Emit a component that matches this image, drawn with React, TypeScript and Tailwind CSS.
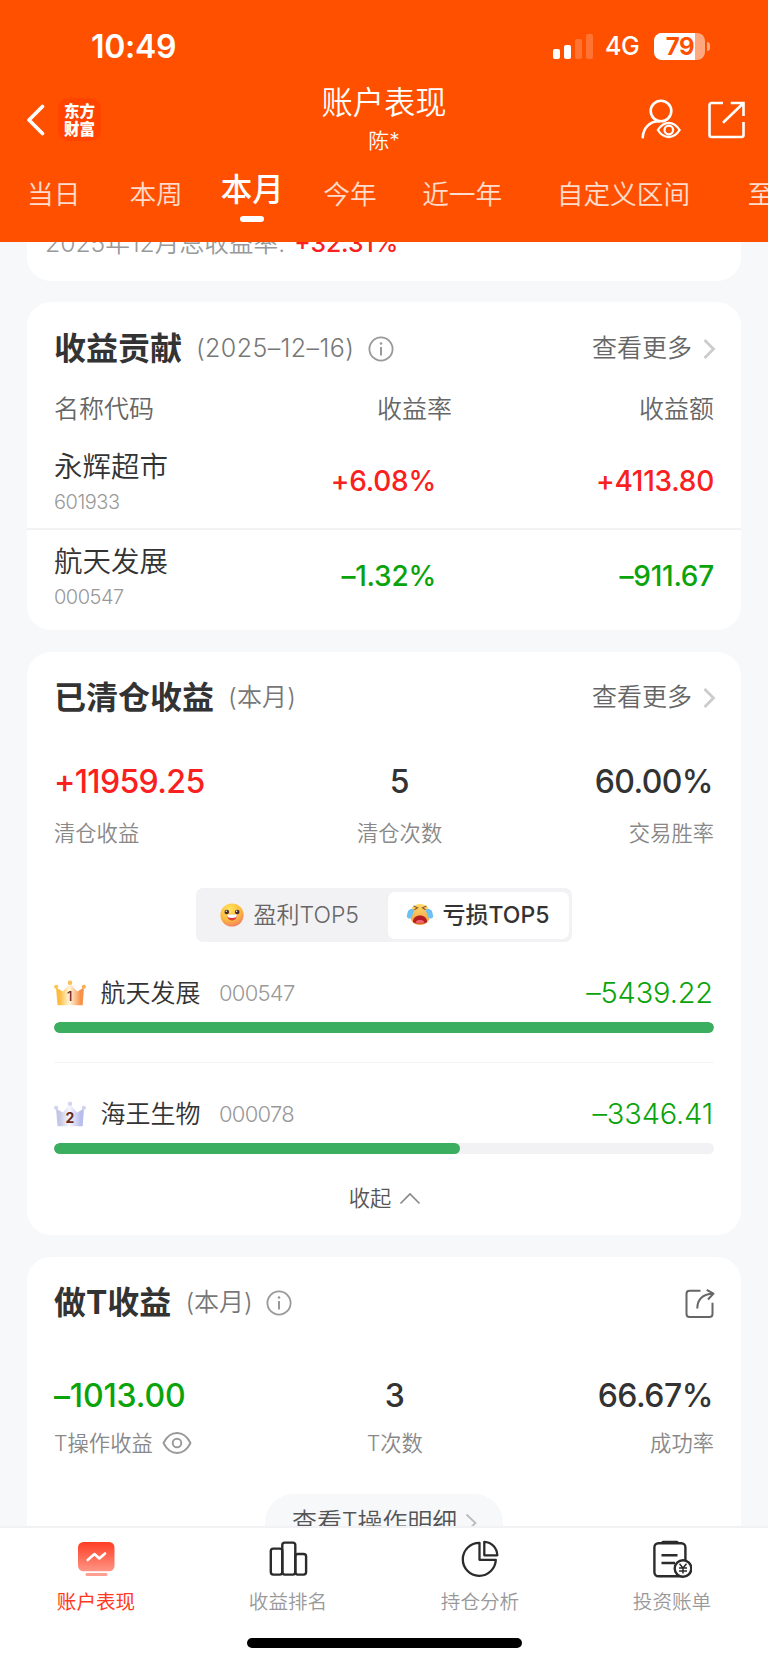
import type { ReactNode } from 'react'
import clsx from 'clsx'

interface Tab {
    label: string
    className: string
    active?: boolean
}

interface Holding {
    name: string
    code: string
    rate: string
    amount: string
    down?: boolean
}

interface RankProps {
    rank: number
    name: string
    code: string
    value: string
    percent: number
}

const TABS: Tab[] = [
    { label: '当日', className: 'ml-[27px]' },
    { label: '本周', className: 'ml-[49px]' },
    { label: '本月', className: 'ml-[38px]', active: true },
    { label: '今年', className: 'ml-[39.5px]' },
    { label: '近一年', className: 'ml-[45.5px]' },
    { label: '自定义区间', className: 'ml-[54.5px]' },
    { label: '至今', className: 'ml-[57.5px]' },
]

const HOLDINGS: Holding[] = [
    { name: '永辉超市', code: '601933', rate: '+6.08%', amount: '+4113.80' },
    { name: '航天发展', code: '000547', rate: '–1.32%', amount: '–911.67', down: true },
]

const RANKS: RankProps[] = [
    { rank: 1, name: '航天发展', code: '000547', value: '–5439.22', percent: 100 },
    { rank: 2, name: '海王生物', code: '000078', value: '–3346.41', percent: 61.5 },
]

function StatusBar () {
    return (
        <div className="flex h-[86px] items-center pt-[7px] pr-[58px] pl-[91px]">
            <span className="flex-1 text-[32px] leading-none font-semibold tracking-[-0.3px]">10:49</span>
            <div className="flex h-[25px] items-end gap-[4px]">
                <i className="h-[10px] w-[7px] rounded-[2px] bg-white" />
                <i className="h-[14px] w-[7px] rounded-[2px] bg-white" />
                <i className="h-[20px] w-[7px] rounded-[2px] bg-white/20" />
                <i className="h-[25px] w-[7px] rounded-[2px] bg-white/20" />
            </div>
            <span className="ml-[12px] w-[49px] text-[25px] leading-none font-medium tracking-[-0.5px]">4G</span>
            <div className="flex h-[27px] w-[51px] items-center overflow-hidden rounded-[8px] bg-white/50">
                <span className="h-full w-[41px] bg-white pr-[1px] text-right text-[24px] leading-[27px] font-bold tracking-[-0.5px] text-[#ff5000]">79</span>
            </div>
            <i className="ml-[2px] h-[9px] w-[3px] rounded-r-full bg-white/50" />
        </div>
    )
}

function NavBar () {
    return (
        <div className="flex h-[66px] items-start">
            <div className="flex h-full w-[140px] items-center pl-[26px]">
                <svg className="mt-[1px]" width="19" height="32" viewBox="0 0 19 32" fill="none" stroke="#fff" strokeWidth="3.6" strokeLinecap="round" strokeLinejoin="round">
                    <path d="M16.5 2.5L3 16l13.500 13.500" />
                </svg>
                <div className="ml-[13px] flex size-[43px] flex-col items-center justify-center rounded-[10px] bg-[#ff4400] pb-[1px] font-['Noto_Sans_CJK_SC',sans-serif] text-[15.5px] leading-[18px] font-black">
                    <span>东方</span>
                    <span>财富</span>
                </div>
            </div>
            <div className="flex-1 text-center">
                <h1 className="text-[31.3px] leading-[35px] font-[350]">账户表现</h1>
                <p className="mt-[8px] text-[21px] leading-[24px] font-[350]">陈*</p>
            </div>
            <div className="flex h-full w-[140px] items-center justify-end gap-[26px] pr-[23px]">
                <svg width="41" height="41" viewBox="0 0 41 41" fill="none" stroke="#fff" strokeWidth="2.6" strokeLinecap="round">
                    <circle cx="21" cy="12" r="10.300" />
                    <path d="M2.700 38.300C3.300 29 9.500 22.500 19 22.300" />
                    <path d="M17.900 31C21 26 24.500 23.800 28.800 23.800S36.500 26 39.600 31C36.500 36 33 38 28.800 38S21 36 17.900 31Z" strokeWidth="2.300" />
                    <circle cx="28.800" cy="31" r="4.300" strokeWidth="2.300" />
                </svg>
                <svg width="38" height="39" viewBox="0 0 38 39" fill="none" stroke="#fff" strokeWidth="2.6">
                    <path d="M16 3H4.500A2 2 0 0 0 2.500 5V35A2 2 0 0 0 4.500 37H34.500A2 2 0 0 0 36.500 35V22" />
                    <path d="M23.700 3H36.500V16M16 22.800L36 3.500" />
                </svg>
            </div>
        </div>
    )
}

function PeriodTabs () {
    return (
        <div className="flex h-[90px] items-start overflow-hidden whitespace-nowrap">
            {TABS.map(tab => (
                <div
                    key={tab.label}
                    className={clsx('flex shrink-0 flex-col items-center leading-[32px]', tab.className, tab.active ? 'pt-[22px]' : 'pt-[26px]')}>
                    <span className={tab.active ? 'text-[31.5px] font-medium' : 'text-[26.7px] font-[350] text-white/80'}>{tab.label}</span>
                    {tab.active && <i className="mt-[10px] h-[6px] w-[24px] rounded-full bg-white" />}
                </div>
            ))}
        </div>
    )
}

function InfoIcon () {
    return (
        <svg width="26" height="26" viewBox="0 0 26 26" fill="none" stroke="#999" strokeWidth="1.8">
            <circle cx="13" cy="13" r="11.600" />
            <path d="M13 11v8.500" strokeWidth="2" />
            <circle cx="13" cy="7.500" r="1.300" fill="#999" stroke="none" />
        </svg>
    )
}

function More () {
    return (
        <div className="-mr-[2px] flex items-center text-[25px] font-[350] text-[#666]">
            查看更多
            <svg className="ml-[11px]" width="13" height="22" viewBox="0 0 13 22" fill="none" stroke="#ccc" strokeWidth="2.800">
                <path d="M1.500 2L10.500 11L1.500 20" />
            </svg>
        </div>
    )
}

interface CardTitleProps {
    title: string
    sub: string
    subClassName?: string
    info?: boolean
    children: ReactNode
}

function CardTitle ({ title, sub, subClassName = 'tracking-[0.2px]', info, children }: CardTitleProps) {
    return (
        <div className="flex h-[42px] items-center">
            <h2 className="text-[32px] leading-[42px] font-bold text-[#333]">{title}</h2>
            <span className={clsx('ml-[14px] text-[25px] font-[350] text-[#777]', subClassName)}>{sub}</span>
            {info && <span className="ml-[13.5px]"><InfoIcon /></span>}
            <div className="ml-auto">{children}</div>
        </div>
    )
}

function HoldingRow ({ item, className }: { item: Holding, className: string }) {
    const color = item.down ? 'text-[#0aa30a]' : 'text-[#fa2020]'
    return (
        <div className={clsx('flex px-[27px]', className)}>
            <div className="flex-1">
                <p className="text-[28.5px] leading-[36px] font-[350] text-[#333]">{item.name}</p>
                <p className="text-[20px] leading-[34px] font-[350] tracking-[-0.5px] text-[#999]">{item.code}</p>
            </div>
            <p className={clsx('w-[180px] text-right text-[28px] leading-[64px] font-[550] tracking-[-0.25px]', color)}>{item.rate}</p>
            <p className={clsx('w-[278px] text-right text-[28px] leading-[64px] font-[550] tracking-[-0.25px]', color)}>{item.amount}</p>
        </div>
    )
}

interface StatProps {
    value: string
    label: string
    valueClassName: string
    labelClassName: string
    align: string
    icon?: ReactNode
}

function Stat ({ value, label, valueClassName, labelClassName, align, icon }: StatProps) {
    return (
        <div className={align}>
            <p className={clsx('text-[32px] leading-[48px] font-[550]', valueClassName)}>{value}</p>
            <div className={clsx('flex items-center text-[21.3px] leading-[34px] font-[350] text-[#888]', labelClassName)}>
                {label}
                {icon}
            </div>
        </div>
    )
}

function HappyFace () {
    return (
        <svg width="24" height="24" viewBox="0 0 24 24">
            <defs>
                <radialGradient id="happy" cx=".4" cy=".25" r=".8">
                    <stop offset="0" stopColor="#ffe45c" />
                    <stop offset=".6" stopColor="#fcb93c" />
                    <stop offset="1" stopColor="#f0786a" />
                </radialGradient>
            </defs>
            <circle cx="12" cy="12" r="11.600" fill="url(#happy)" />
            <circle cx="6.800" cy="9" r="2.300" fill="#4a2a2a" />
            <circle cx="17.200" cy="9" r="2.300" fill="#4a2a2a" />
            <circle cx="6.300" cy="8.200" r=".7" fill="#fff" />
            <circle cx="16.600" cy="8.200" r=".7" fill="#fff" />
            <path d="M6.800 11.800H17.200C16.800 15.500 15 17.400 12 17.400S7.200 15.500 6.800 11.800Z" fill="#e0393c" />
            <path d="M7 11.600H17L16.300 14.300C13.500 15.200 10.500 15.200 7.700 14.300Z" fill="#fff" />
        </svg>
    )
}

function CryFace () {
    return (
        <svg width="28" height="22" viewBox="0 0 28 22">
            <defs>
                <linearGradient id="cry" x1="0" y1="0" x2="0" y2="1">
                    <stop offset="0" stopColor="#ffdc6a" />
                    <stop offset="1" stopColor="#f29a3c" />
                </linearGradient>
            </defs>
            <path d="M14 0C21 0 24 5 24 11S20 21 14 21S4 17 4 11S7 0 14 0Z" fill="url(#cry)" />
            <path d="M7.500 2L11.500 3.800L8.500 5.800M20.500 2L16.500 3.800L19.500 5.800" fill="none" stroke="#8a5a34" strokeWidth="1.200" />
            <path d="M2 7C4 4.500 7 4.500 8.500 6L5.500 13.500C3.500 15.500 .8 14.500 .8 12Z" fill="#6cc0f4" />
            <path d="M26 7C24 4.500 21 4.500 19.500 6L22.500 13.500C24.500 15.500 27.200 14.500 27.200 12Z" fill="#6cc0f4" />
            <path d="M7 18C6.800 14 10 11.500 14 11.500S21.200 14 21 18C19 20 9 20 7 18Z" fill="#b31c22" />
            <path d="M9.500 18.500C10 16.500 12 16 14 16S18 16.500 18.500 18.500C16 19.500 12 19.500 9.500 18.500Z" fill="#f0656c" />
        </svg>
    )
}

const CROWN_COLORS = {
    1: { left: '#ffbb3c', middle: '#fff6dc', right: '#f7924a' },
    2: { left: '#c3c6e6', middle: '#f6f6fd', right: '#b9bdee' },
}

function Crown ({ rank }: { rank: number }) {
    const { left, middle, right } = CROWN_COLORS[rank as keyof typeof CROWN_COLORS]
    return (
        <svg width="32" height="26" viewBox="0 0 32 26">
            <defs>
                <linearGradient id={`crown-${rank}`}>
                    <stop offset=".12" stopColor={left} />
                    <stop offset=".48" stopColor={middle} />
                    <stop offset=".88" stopColor={right} />
                </linearGradient>
            </defs>
            <path d="M2 7.500L8.800 11.500L16 3.500L23.200 11.500L30 7.500L28.700 25.300H3.500Z" fill={`url(#crown-${rank})`} />
            <circle cx="2.200" cy="6.800" r="2.100" fill={rank === 1 ? '#fcc54e' : '#cfd3f2'} />
            <circle cx="16" cy="2.800" r="2.300" fill={rank === 1 ? '#fcc058' : '#d4d7f4'} />
            <circle cx="29.800" cy="6.800" r="2.100" fill={rank === 1 ? '#fbad55' : '#cfd3f2'} />
            <text x="15.800" y={rank === 1 ? 20.700 : 21.500} textAnchor="middle" fontSize={rank === 1 ? 13 : 14} fontWeight={rank === 1 ? 500 : 700} fill="#6b2a1c">{rank}</text>
        </svg>
    )
}

function RankRow ({ rank, name, code, value, percent }: RankProps) {
    return (
        <div>
            <div className="flex h-[36px] items-center leading-[36px]">
                <Crown rank={rank} />
                <span className="ml-[14.5px] text-[25px] font-[350] text-[#333]">{name}</span>
                <span className="ml-[18.5px] text-[22px] font-[350] tracking-[-0.75px] text-[#999]">{code}</span>
                <span className="mr-[1px] ml-auto text-[29px] font-[350] tracking-[-0.15px] text-[#0aa30a]">{value}</span>
            </div>
            <div className="mt-[10.5px] h-[11px] overflow-hidden rounded-full bg-[#f2f2f4]">
                <div className="h-full rounded-full bg-[#3cae60]" style={{ width: `${percent}%` }} />
            </div>
        </div>
    )
}

function ClearedCard () {
    return (
        <section className="mt-[22px] h-[583px] rounded-[24px] bg-white px-[27px] pt-[25px]">
            <CardTitle title="已清仓收益" sub="(本月)"><More /></CardTitle>
            <div className="mt-[39px] flex justify-between">
                <Stat value="+11959.25" label="清仓收益" valueClassName="tracking-[-0.65px] text-[#fa2020]" labelClassName="mt-[10px]" align="text-left" />
                <Stat value="5" label="清仓次数" valueClassName="text-[#333]" labelClassName="mt-[10px] justify-center" align="text-center" />
                <Stat value="60.00%" label="交易胜率" valueClassName="mr-[1px] tracking-[-0.6px] text-[#333]" labelClassName="mt-[10px] justify-end" align="text-right" />
            </div>
            <div className="mx-auto mt-[38px] flex h-[54px] w-[376px] rounded-[7px] bg-[#f2f2f4] p-[3.5px] text-[23px]">
                <div className="flex w-[188px] items-center pl-[20px] font-[350] text-[#666]">
                    <HappyFace />
                    <span className="ml-[10px]">盈利TOP5</span>
                </div>
                <div className="flex flex-1 items-center rounded-[7px] bg-white pl-[18px] font-medium text-[#333]">
                    <CryFace />
                    <span className="ml-[9px]">亏损TOP5</span>
                </div>
            </div>
            <div className="mt-[33px]">
                <RankRow {...RANKS[0]} />
                <hr className="mt-[29.5px] mb-[33px] h-px border-0 bg-[#f4f4f5]" />
                <RankRow {...RANKS[1]} />
            </div>
            <div className="mt-[30px] ml-[2px] flex h-[30px] items-center justify-center text-[21.3px] font-[350] text-[#555]">
                收起
                <svg className="ml-[8px]" width="22" height="14" viewBox="0 0 22 14" fill="none" stroke="#888" strokeWidth="1.600">
                    <path d="M1.500 11.500L11 2L20.500 11.500" />
                </svg>
            </div>
        </section>
    )
}

function EyeIcon () {
    return (
        <svg className="ml-[9px]" width="30" height="24" viewBox="0 0 30 24" fill="none" stroke="#999" strokeWidth="1.900">
            <path d="M1.500 12C5 5 9.500 2 15 2S25 5 28.500 12C25 19 20.500 22 15 22S5 19 1.500 12Z" strokeLinejoin="round" />
            <circle cx="15" cy="12" r="4.300" />
        </svg>
    )
}

function TradeCard () {
    return (
        <section className="mt-[22px] h-[340px] rounded-[24px] bg-white px-[27px] pt-[25px]">
            <CardTitle title="做T收益" sub="(本月)" subClassName="-ml-px" info>
                <svg className="-mr-[1px]" width="31" height="31" viewBox="0 0 31 31" fill="none" stroke="#666" strokeWidth="2" strokeLinejoin="round">
                    <path d="M16.500 2.700H5.500A3 3 0 0 0 2.500 5.700V26A3 3 0 0 0 5.500 29H25.500A3 3 0 0 0 28.500 26V14.700" />
                    <path d="M13.300 20.500C13.300 12 17.500 6.500 29 5.600M22.700 1.800L29.500 5.600L24 11.500" />
                </svg>
            </CardTitle>
            <div className="mt-[48px] flex justify-between">
                <Stat value="–1013.00" label="T操作收益" valueClassName="tracking-[-0.15px] text-[#0aa30a]" labelClassName="mt-[6px]" align="text-left" icon={<EyeIcon />} />
                <Stat value="3" label="T次数" valueClassName="text-[#333]" labelClassName="mt-[6px] justify-center" align="text-center" />
                <Stat value="66.67%" label="成功率" valueClassName="mr-[1px] tracking-[-0.5px] text-[#333]" labelClassName="mt-[6px] justify-end" align="text-right" />
            </div>
            <div className="mx-auto mt-[34px] flex h-[58px] w-[238px] items-center rounded-full bg-[#f7f8fa] pl-[27px] text-[24.9px] font-[350] text-[#555]">
                查看T操作明细
                <svg className="ml-[8px]" width="13" height="20" viewBox="0 0 13 20" fill="none" stroke="#bbb" strokeWidth="1.800">
                    <path d="M1.500 1.500L10.500 10L1.500 18.500" />
                </svg>
            </div>
        </section>
    )
}

function PerformanceIcon () {
    return (
        <svg width="40" height="40" viewBox="0 0 40 40" fill="none">
            <defs>
                <linearGradient id="screen" x1="0" y1="0" x2="0" y2="1">
                    <stop offset="0" stopColor="#ff3d24" />
                    <stop offset="1" stopColor="#ff9585" />
                </linearGradient>
            </defs>
            <rect x="2" y="3" width="36.500" height="29.300" rx="5.500" fill="url(#screen)" />
            <path d="M11.700 21L18.500 15L23.300 19.500L29 14.500" stroke="#fff" strokeWidth="2.600" strokeLinecap="round" strokeLinejoin="round" />
            <rect x="9.500" y="34" width="22" height="3" rx="1.500" fill="#ff9f90" />
        </svg>
    )
}

function RankingIcon () {
    return (
        <svg width="40" height="40" viewBox="0 0 40 40" fill="none" stroke="#2b2b2b" strokeWidth="2.400">
            <rect x="2.800" y="9.600" width="11.500" height="26" rx="2.500" />
            <rect x="14.300" y="3.600" width="13" height="32" rx="2.500" />
            <rect x="27.300" y="15" width="10.800" height="20.600" rx="2.500" />
        </svg>
    )
}

function PieIcon () {
    return (
        <svg width="40" height="40" viewBox="0 0 40 40" fill="none" stroke="#2b2b2b" strokeWidth="2.300" strokeLinejoin="round">
            <path d="M19.500 3.800V20.800H35.800A16.500 16.500 0 1 1 19.500 3.800Z" />
            <path d="M24.300 2.800V16.300H37.300C37 9 32 3.200 24.300 2.800Z" />
        </svg>
    )
}

function BillIcon () {
    return (
        <svg width="40" height="40" viewBox="0 0 40 40" fill="none" stroke="#2b2b2b" strokeWidth="2.400">
            <rect x="2.400" y="4.200" width="31" height="33" rx="4" />
            <path d="M11 3.400H25" strokeWidth="3.400" strokeLinecap="round" />
            <path d="M9.500 16.300H25.500M9.500 24H23" />
            <circle cx="31" cy="29.500" r="8.300" fill="#fff" />
            <path d="M27.500 24.800L31 29L34.500 24.800M31 29V34.500M27 29H35M27 31.900H35" strokeWidth="1.500" />
        </svg>
    )
}

const MENUS = [
    { label: '账户表现', icon: <PerformanceIcon />, active: true },
    { label: '收益排名', icon: <RankingIcon /> },
    { label: '持仓分析', icon: <PieIcon /> },
    { label: '投资账单', icon: <BillIcon /> },
]

export default function App () {
    return (
        <div className="flex h-[1662px] w-[768px] flex-col overflow-hidden bg-[#f6f8fa] font-['Inter','Noto_Sans_CJK_SC',sans-serif]">
            <header className="h-[242px] shrink-0 bg-[#ff5000] text-white">
                <StatusBar />
                <NavBar />
                <PeriodTabs />
            </header>

            <main className="min-h-0 flex-1 overflow-hidden px-[27px]">
                <section className="-mt-[20px] flex h-[59px] rounded-b-[24px] bg-white pt-[5px] pl-[18px] text-[24.7px] leading-[32px]">
                    <span className="font-[350] text-[#999]">2025年12月总收益率:</span>
                    <span className="ml-[9px] font-medium text-[#fa2020]">+32.31%</span>
                </section>

                <section className="mt-[21px] h-[328px] rounded-[24px] bg-white pt-[26px]">
                    <div className="px-[27px]">
                        <CardTitle title="收益贡献" sub="(2025–12–16)" subClassName="tracking-[0.4px]" info><More /></CardTitle>
                        <div className="mt-[19px] flex text-[25px] leading-[40px] font-[350] text-[#666]">
                            <span className="flex-1">名称代码</span>
                            <span>收益率</span>
                            <span className="w-[262px] text-right">收益额</span>
                        </div>
                    </div>
                    <HoldingRow item={HOLDINGS[0]} className="h-[99px] pt-[20px]" />
                    <hr className="h-[2px] border-0 bg-[#f2f2f4]" />
                    <HoldingRow item={HOLDINGS[1]} className="pt-[14px]" />
                </section>

                <ClearedCard />
                <TradeCard />
            </main>

            <footer className="h-[136px] shrink-0 border-t-2 border-[#f2f2f4] bg-white">
                <nav className="flex">
                    {MENUS.map(menu => (
                        <div key={menu.label} className="flex flex-1 flex-col items-center pt-[11px]">
                            {menu.icon}
                            <span className={clsx('mt-[10px] text-[19.6px] leading-[26px]', menu.active ? 'text-[#ff3a20]' : 'font-[350] text-[#999]')}>{menu.label}</span>
                        </div>
                    ))}
                </nav>
                <div className="mx-auto mt-[23px] h-[10px] w-[275px] rounded-full bg-black" />
            </footer>
        </div>
    )
}
